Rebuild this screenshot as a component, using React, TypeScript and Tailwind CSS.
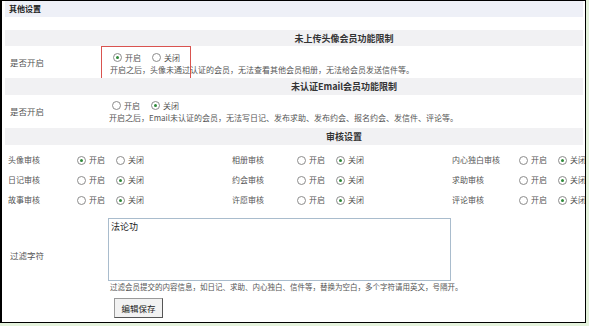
import React from 'react';

const font = { fontFamily: '"Noto Sans CJK SC", "Liberation Sans", sans-serif' };

function Radio({ label, checked }: { label: string; checked?: boolean }) {
  return (
    <span className="inline-flex shrink-0 items-center gap-[3px] whitespace-nowrap">
      <span className="flex h-[9px] w-[9px] items-center justify-center rounded-full border border-[#8c8c8c] bg-white">
        {checked ? <span className="h-[3px] w-[3px] rounded-full bg-[#2f8a3a]" /> : null}
      </span>
      <span>{label}</span>
    </span>
  );
}

function RadioPair({ on }: { on: boolean }) {
  return (
    <div className="flex shrink-0 items-center gap-[11px] whitespace-nowrap">
      <Radio label="开启" checked={on} />
      <Radio label="关闭" checked={!on} />
    </div>
  );
}

function SectionHead({ title, className = '' }: { title: string; className?: string }) {
  return (
    <div className={`flex items-center bg-[#f1f1f3] ${className}`}>
      <div className="w-[100px] shrink-0" />
      <div className="flex-1 text-center text-[9px] font-bold text-[#333]">{title}</div>
    </div>
  );
}

const audits: [string, boolean][][] = [
  [
    ['头像审核', true],
    ['相册审核', false],
    ['内心独白审核', false]
  ],
  [
    ['日记审核', false],
    ['约会审核', false],
    ['求助审核', false]
  ],
  [
    ['故事审核', false],
    ['许愿审核', false],
    ['评论审核', false]
  ]
];

const groupWidths = ['w-[224px]', 'w-[220px]', 'flex-1'];
const labelWidths = ['w-[72px]', 'w-[68px]', 'w-[70px]'];

export default function App() {
  return (
    <div className="h-[326px] w-[589px] bg-[#e4f2dc]" style={font}>
      <div className="flex h-[323px] w-[586px] flex-col overflow-hidden border-l-2 border-r border-b border-t border-black bg-white pl-[3px] pr-[2px] text-[8px] leading-none text-[#555]">
        <div className="flex h-[16px] items-center bg-[#eef0f7] pl-[4px] text-[8px] font-bold text-[#222]">
          其他设置
        </div>
        <div className="h-[13px]" />

        <SectionHead title="未上传头像会员功能限制" className="h-[16px]" />
        <div className="flex h-[32px] items-center">
          <div className="w-[96px] shrink-0 pl-[5px] text-[8.5px]">是否开启</div>
          <div className="flex h-[33px] w-[90px] flex-col justify-center gap-[4px] self-start border border-[#d9534f] pl-[11px] pt-[2px] whitespace-nowrap">
            <RadioPair on={true} />
            <span className="-ml-[3px] w-0 overflow-visible">
              开启之后，头像未通过认证的会员，无法查看其他会员相册，无法给会员发送信件等。
            </span>
          </div>
        </div>

        <SectionHead title="未认证Email会员功能限制" className="h-[17px]" />
        <div className="flex h-[33px] items-center">
          <div className="w-[104px] shrink-0 pl-[5px] text-[8.5px]">是否开启</div>
          <div className="flex flex-col gap-[4px] whitespace-nowrap">
            <div className="pl-[3px]">
              <RadioPair on={false} />
            </div>
            <span>开启之后，Email未认证的会员，无法写日记、发布求助、发布约会、报名约会、发信件、评论等。</span>
          </div>
        </div>

        <SectionHead title="审核设置" className="h-[17px]" />
        <div className="h-[5px]" />
        {audits.map((row, r) => (
          <div key={r} className="flex h-[20px] items-center whitespace-nowrap">
            {row.map(([label, on], i) => (
              <div key={label} className={`flex min-w-0 items-center ${groupWidths[i]}`}>
                <div className={`${labelWidths[i]} shrink-0 pl-[3px]`}>{label}</div>
                <RadioPair on={on} />
              </div>
            ))}
          </div>
        ))}

        <div className="flex pt-[8px]">
          <div className="flex w-[103px] shrink-0 items-center pl-[5px] text-[8.5px]">过滤字符</div>
          <div className="flex flex-col">
            <div className="h-[63px] w-[343px] border border-[#a9bccd] px-[2px] pt-[3px] text-[9px] text-[#222]">
              法论功
            </div>
            <div className="flex h-[12px] items-center pl-[2px] text-[7.5px] whitespace-nowrap">
              过滤会员提交的内容信息，如日记、求助、内心独白、信件等，替换为空白，多个字符请用英文，号隔开。
            </div>
          </div>
        </div>
        <div className="flex pl-[109px] pt-[5px]">
          <button
            type="button"
            className="h-[20px] w-[49px] border border-[#9a9a9a] border-r-[#555] border-b-[#555] bg-[#f2f2f2] text-[8.5px] text-[#222]"
          >
            编辑保存
          </button>
        </div>
      </div>
    </div>
  );
}
